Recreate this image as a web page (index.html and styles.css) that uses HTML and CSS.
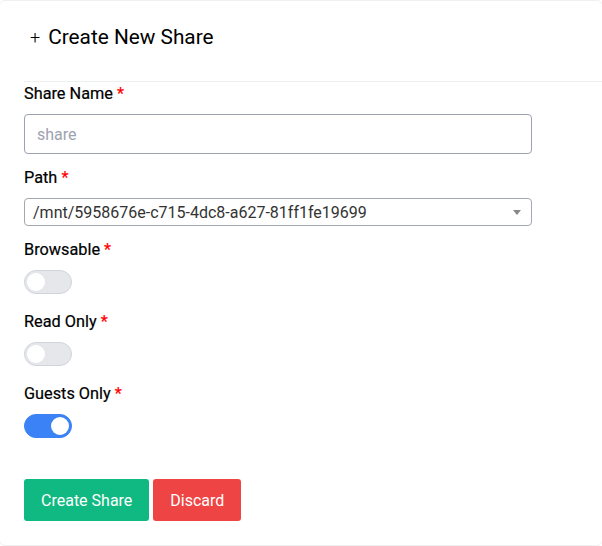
FILE: index.html
```html
<!DOCTYPE html>
<html>
<head>
<meta charset="utf-8">
<link rel="stylesheet" href="styles.css">
</head>
<body>
<div class="card">
  <div class="card-header">
    <span class="plus">+</span><span class="title">Create New Share</span>
  </div>
  <div class="card-body">
    <div class="field">
      <label class="label">Share Name <span class="req">*</span></label>
      <input class="input" type="text" placeholder="share">
    </div>
    <div class="field">
      <label class="label">Path <span class="req">*</span></label>
      <div class="select">
        <span class="select-text">/mnt/5958676e-c715-4dc8-a627-81ff1fe19699</span>
        <span class="caret"></span>
      </div>
    </div>
    <div class="field toggle-field">
      <label class="label">Browsable <span class="req">*</span></label>
      <div class="toggle"><span class="knob"></span></div>
    </div>
    <div class="field toggle-field">
      <label class="label">Read Only <span class="req">*</span></label>
      <div class="toggle"><span class="knob"></span></div>
    </div>
    <div class="field toggle-field">
      <label class="label">Guests Only <span class="req">*</span></label>
      <div class="toggle on"><span class="knob"></span></div>
    </div>
    <div class="actions">
      <button class="btn btn-green">Create Share</button>
      <button class="btn btn-red">Discard</button>
    </div>
  </div>
</div>
</body>
</html>
```
FILE: styles.css
```css
* { box-sizing: border-box; }
html, body { margin: 0; padding: 0; background: #fff; }
body {
  font-family: Roboto, "Liberation Sans", sans-serif;
  color: #111;
}
.card {
  width: 604px;
  height: 546px;
  border: 1px solid #f0f0f1;
  border-radius: 6px;
  background: #fff;
  margin-left: -1px;
}
.card-header {
  margin-left: 24px;
  height: 81px;
  border-bottom: 1px solid #eeeff1;
  display: flex;
  align-items: center;
  padding-left: 6px;
  padding-bottom: 8px;
  font-size: 20.8px;
  color: #000;
}
.plus { font-size: 18px; font-weight: 300; margin-right: 8px; }
.card-body {
  padding: 0 24px 24px 24px;
  display: flex;
  flex-direction: column;
}
.field {
  display: flex;
  flex-direction: column;
  gap: 8px;
  margin-bottom: 12px;
}
.toggle-field { margin-bottom: 16px; }
.label {
  font-size: 16.3px;
  line-height: 24px;
  font-weight: 400;
  color: #000;
  -webkit-text-stroke: 0.2px #000;
}
.req { color: #f00; -webkit-text-stroke: 0.2px #f00; }
.input {
  width: 508px;
  height: 40px;
  border: 1px solid #9ca3af;
  border-radius: 4px;
  padding: 0 12px;
  font-family: inherit;
  font-size: 16px;
  color: #333;
}
.input::placeholder { color: #9ca3af; }
.select {
  width: 508px;
  height: 28px;
  border: 1px solid #a3a8b0;
  border-radius: 4px;
  padding: 0 8px;
  display: flex;
  align-items: center;
  justify-content: space-between;
  font-size: 16px;
  color: #333;
}
.caret {
  width: 0; height: 0;
  border-left: 4px solid transparent;
  border-right: 4px solid transparent;
  border-top: 5px solid #888;
  margin-right: 2px;
}
.toggle {
  width: 48px;
  height: 24px;
  border-radius: 12px;
  background: #e5e7eb;
  border: 1px solid #d1d5db;
  padding: 2px;
  display: flex;
}
.knob {
  width: 18px;
  height: 18px;
  border-radius: 50%;
  background: #fff;
}
.toggle.on {
  background: #3b82f6;
  border-color: #3b82f6;
  justify-content: flex-end;
}
.actions {
  display: flex;
  gap: 4px;
  margin-top: 25px;
}
.btn {
  height: 42px;
  border: none;
  border-radius: 3px;
  color: #fff;
  font-family: inherit;
  font-size: 16px;
  padding: 0 17px;
}
.btn-green { background: #10b981; }
.btn-red { background: #ef4444; }
```
